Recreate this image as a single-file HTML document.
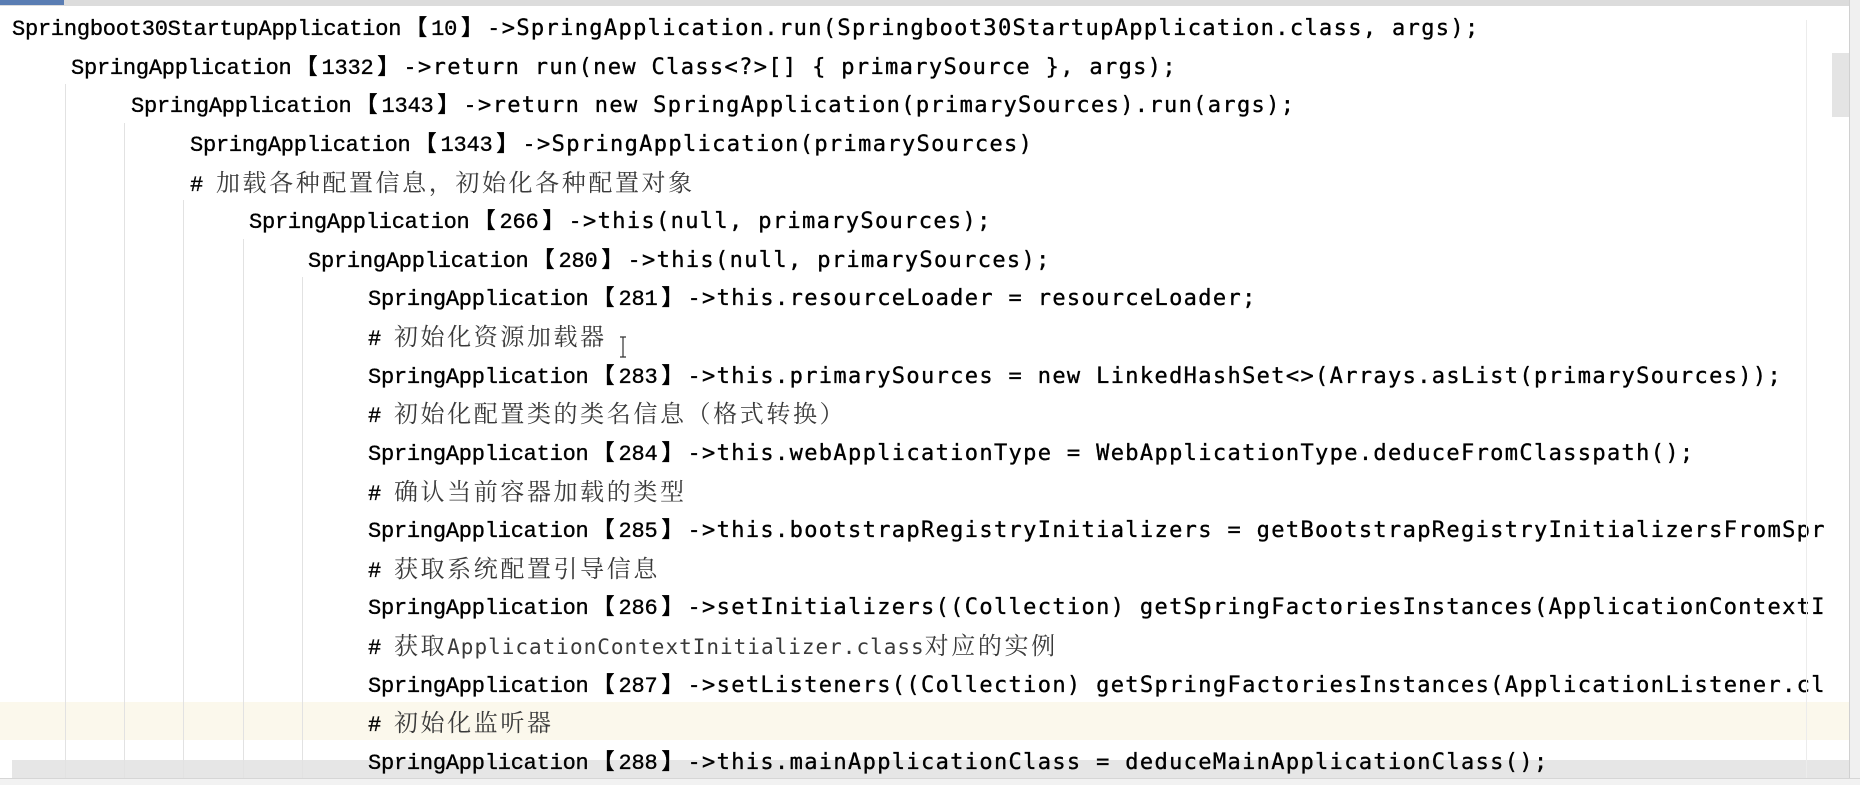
<!DOCTYPE html>
<html><head><meta charset="utf-8"><style>
html,body{margin:0;padding:0;background:#fff;}
body{width:1860px;height:784px;position:relative;overflow:hidden;}
#top{position:absolute;left:0;top:0;width:1860px;height:6px;background:#dcdcdc;}
#tab{position:absolute;left:0;top:0;width:64px;height:5px;background:#5a7db3;}
#ed{position:absolute;left:0;top:6px;width:1849px;height:778px;overflow:hidden;}
.hl{position:absolute;left:0;width:1849px;height:38px;background:#fbf8ec;}
.g{position:absolute;width:1px;background:#e2e2e2;bottom:0;}
.ln{position:absolute;white-space:pre;height:38px;line-height:38px;color:#000;-webkit-text-stroke:0.35px #000;}
.a{font-family:"Liberation Mono",monospace;font-size:22px;letter-spacing:-0.23px;}
.b{display:inline-block;width:30px;text-align:center;font-family:"Noto Sans CJK SC",sans-serif;font-size:22px;font-weight:bold;}
.c{font-family:"DejaVu Sans Mono",monospace;font-size:22px;letter-spacing:1.35px;}
.z{font-family:"Noto Serif CJK SC","Noto Sans CJK SC",serif;font-size:24px;letter-spacing:2.6px;color:#3a3a3a;-webkit-text-stroke:0;}
.zl{font-family:"DejaVu Sans Mono",monospace;font-size:21px;letter-spacing:1px;color:#3a3a3a;-webkit-text-stroke:0;}
#vr{position:absolute;left:1806px;top:20px;width:1px;height:760px;background:#ececec;}
#sb{position:absolute;left:1849px;top:0;width:11px;height:784px;background:#f0f0f0;border-left:1px solid #d0d0d0;}
#th{position:absolute;left:1832px;top:53px;width:17px;height:64px;background:#e4e4e4;}
#hb{position:absolute;left:12px;top:760px;width:1837px;height:18px;background:#e6e6e6;}
#bot{position:absolute;left:0;top:778px;width:1860px;height:6px;background:#f2f2f2;border-top:1px solid #d6d6d6;}
#cur{position:absolute;left:619px;top:336px;width:8px;height:22px;}
</style></head><body>
<div id="top"></div><div id="tab"></div>
<div id="ed">
<div class="hl" style="top:696px"></div>
<div id="hb" style="top:754px"></div>
<div class="g" style="left:65px;top:78px"></div>
<div class="g" style="left:124px;top:117px"></div>
<div class="g" style="left:183px;top:194px"></div>
<div class="g" style="left:243px;top:233px"></div>
<div class="g" style="left:302px;top:271px"></div>

<div class="ln" style="left:12px;top:1px"><span class="a">Springboot30StartupApplication</span><span class="b">【</span><span class="a">10</span><span class="b">】</span><span class="c">->SpringApplication.run(Springboot30StartupApplication.class, args);</span></div>
<div class="ln" style="left:71px;top:40px"><span class="a">SpringApplication</span><span class="b">【</span><span class="a">1332</span><span class="b">】</span><span class="c">->return run(new Class&lt;?&gt;[] { primarySource }, args);</span></div>
<div class="ln" style="left:131px;top:78px"><span class="a">SpringApplication</span><span class="b">【</span><span class="a">1343</span><span class="b">】</span><span class="c">->return new SpringApplication(primarySources).run(args);</span></div>
<div class="ln" style="left:190px;top:117px"><span class="a">SpringApplication</span><span class="b">【</span><span class="a">1343</span><span class="b">】</span><span class="c">->SpringApplication(primarySources)</span></div>
<div class="ln" style="left:190px;top:156px"><span class="a"># </span><span class="z">加载各种配置信息，初始化各种配置对象</span></div>
<div class="ln" style="left:249px;top:194px"><span class="a">SpringApplication</span><span class="b">【</span><span class="a">266</span><span class="b">】</span><span class="c">->this(null, primarySources);</span></div>
<div class="ln" style="left:308px;top:233px"><span class="a">SpringApplication</span><span class="b">【</span><span class="a">280</span><span class="b">】</span><span class="c">->this(null, primarySources);</span></div>
<div class="ln" style="left:368px;top:271px"><span class="a">SpringApplication</span><span class="b">【</span><span class="a">281</span><span class="b">】</span><span class="c">->this.resourceLoader = resourceLoader;</span></div>
<div class="ln" style="left:368px;top:310px"><span class="a"># </span><span class="z">初始化资源加载器</span></div>
<div class="ln" style="left:368px;top:349px"><span class="a">SpringApplication</span><span class="b">【</span><span class="a">283</span><span class="b">】</span><span class="c">->this.primarySources = new LinkedHashSet&lt;&gt;(Arrays.asList(primarySources));</span></div>
<div class="ln" style="left:368px;top:387px"><span class="a"># </span><span class="z">初始化配置类的类名信息（格式转换）</span></div>
<div class="ln" style="left:368px;top:426px"><span class="a">SpringApplication</span><span class="b">【</span><span class="a">284</span><span class="b">】</span><span class="c">->this.webApplicationType = WebApplicationType.deduceFromClasspath();</span></div>
<div class="ln" style="left:368px;top:465px"><span class="a"># </span><span class="z">确认当前容器加载的类型</span></div>
<div class="ln" style="left:368px;top:503px"><span class="a">SpringApplication</span><span class="b">【</span><span class="a">285</span><span class="b">】</span><span class="c">->this.bootstrapRegistryInitializers = getBootstrapRegistryInitializersFromSpr</span></div>
<div class="ln" style="left:368px;top:542px"><span class="a"># </span><span class="z">获取系统配置引导信息</span></div>
<div class="ln" style="left:368px;top:580px"><span class="a">SpringApplication</span><span class="b">【</span><span class="a">286</span><span class="b">】</span><span class="c">->setInitializers((Collection) getSpringFactoriesInstances(ApplicationContextI</span></div>
<div class="ln" style="left:368px;top:619px"><span class="a"># </span><span class="z">获取</span><span class="zl">ApplicationContextInitializer.class</span><span class="z">对应的实例</span></div>
<div class="ln" style="left:368px;top:658px"><span class="a">SpringApplication</span><span class="b">【</span><span class="a">287</span><span class="b">】</span><span class="c">->setListeners((Collection) getSpringFactoriesInstances(ApplicationListener.cl</span></div>
<div class="ln" style="left:368px;top:696px"><span class="a"># </span><span class="z">初始化监听器</span></div>
<div class="ln" style="left:368px;top:735px"><span class="a">SpringApplication</span><span class="b">【</span><span class="a">288</span><span class="b">】</span><span class="c">->this.mainApplicationClass = deduceMainApplicationClass();</span></div>
</div>
<div id="vr"></div>
<div id="th"></div>
<div id="sb"></div>
<svg id="cur" viewBox="0 0 8 22"><path d="M1 1h6M4 1v20M1 21h6" stroke="#333" stroke-width="1.2" fill="none"/></svg>
<div id="bot"></div>
</body></html>
